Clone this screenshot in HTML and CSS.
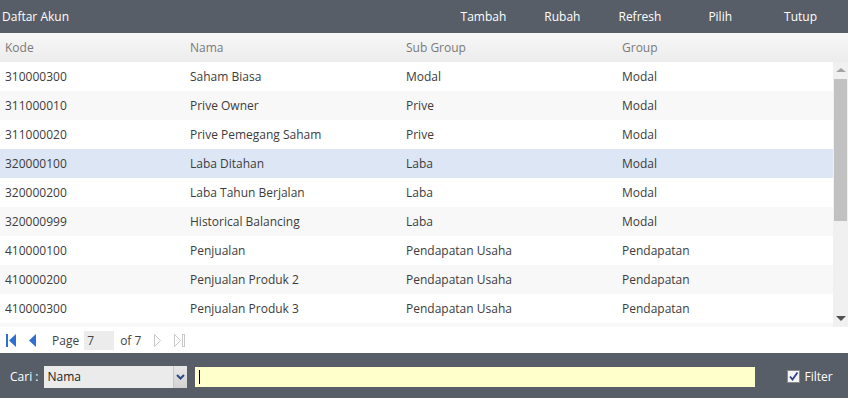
FILE: index.html
```html
<!DOCTYPE html>
<html lang="en">
<head>
    <meta charset="UTF-8">
    <title>Daftar Akun</title>
    <link rel="stylesheet" href="styles.css">
</head>
<body>
    <div class="toolbar">
        <span class="title">Daftar Akun</span>
        <div class="actions">
            <a class="btn btn-tambah">Tambah</a>
            <a class="btn btn-rubah">Rubah</a>
            <a class="btn btn-refresh">Refresh</a>
            <a class="btn btn-pilih">Pilih</a>
            <a class="btn btn-tutup">Tutup</a>
        </div>
    </div>

    <div class="grid-head">
        <div class="col col-kode">Kode</div>
        <div class="col col-nama">Nama</div>
        <div class="col col-sub">Sub Group</div>
        <div class="col col-group">Group</div>
    </div>

    <div class="grid-body">
        <div class="rows">
            <div class="row"><div class="col col-kode">310000300</div><div class="col col-nama">Saham Biasa</div><div class="col col-sub">Modal</div><div class="col col-group">Modal</div></div>
            <div class="row alt"><div class="col col-kode">311000010</div><div class="col col-nama">Prive Owner</div><div class="col col-sub">Prive</div><div class="col col-group">Modal</div></div>
            <div class="row"><div class="col col-kode">311000020</div><div class="col col-nama">Prive Pemegang Saham</div><div class="col col-sub">Prive</div><div class="col col-group">Modal</div></div>
            <div class="row selected"><div class="col col-kode">320000100</div><div class="col col-nama">Laba Ditahan</div><div class="col col-sub">Laba</div><div class="col col-group">Modal</div></div>
            <div class="row"><div class="col col-kode">320000200</div><div class="col col-nama">Laba Tahun Berjalan</div><div class="col col-sub">Laba</div><div class="col col-group">Modal</div></div>
            <div class="row alt"><div class="col col-kode">320000999</div><div class="col col-nama">Historical Balancing</div><div class="col col-sub">Laba</div><div class="col col-group">Modal</div></div>
            <div class="row"><div class="col col-kode">410000100</div><div class="col col-nama">Penjualan</div><div class="col col-sub">Pendapatan Usaha</div><div class="col col-group">Pendapatan</div></div>
            <div class="row alt"><div class="col col-kode">410000200</div><div class="col col-nama">Penjualan Produk 2</div><div class="col col-sub">Pendapatan Usaha</div><div class="col col-group">Pendapatan</div></div>
            <div class="row"><div class="col col-kode">410000300</div><div class="col col-nama">Penjualan Produk 3</div><div class="col col-sub">Pendapatan Usaha</div><div class="col col-group">Pendapatan</div></div>
            <div class="row alt"></div>
        </div>
        <div class="scrollbar">
            <div class="arrow arrow-up"></div>
            <div class="thumb-track"><div class="thumb"></div></div>
            <div class="arrow arrow-down"></div>
        </div>
    </div>

    <div class="pager">
        <svg class="pg-icon" width="11" height="13" viewBox="0 0 11 13"><rect x="0" y="0" width="2" height="13" fill="#2f6fd0"/><polygon points="10,0 10,13 3,6.5" fill="#2f6fd0"/></svg>
        <svg class="pg-icon pg-prev" width="7" height="13" viewBox="0 0 7 13"><polygon points="7,0 7,13 0,6.5" fill="#2f6fd0"/></svg>
        <span class="pg-label pg-page">Page</span>
        <span class="pg-input">7</span>
        <span class="pg-label">of 7</span>
        <svg class="pg-icon pg-next" width="7" height="13" viewBox="0 0 7 13"><polygon points="0.5,0.5 0.5,12.5 6.5,6.5" fill="#fff" stroke="#c8c8c8"/></svg>
        <svg class="pg-icon pg-last" width="11" height="13" viewBox="0 0 11 13"><polygon points="0.5,0.5 0.5,12.5 6.5,6.5" fill="#fff" stroke="#c8c8c8"/><rect x="8.5" y="0.5" width="2" height="12" fill="#fff" stroke="#c8c8c8"/></svg>
    </div>

    <div class="footer">
        <span class="cari">Cari :</span>
        <div class="select">
            <span class="select-text">Nama</span>
            <span class="select-btn">
                <svg width="9" height="6" viewBox="0 0 9 6"><polyline points="1,1 4.5,4.5 8,1" fill="none" stroke="#2c4a86" stroke-width="2"/></svg>
            </span>
        </div>
        <div class="search"><span class="caret"></span></div>
        <label class="filter">
            <span class="check">
                <svg width="11" height="11" viewBox="0 0 11 11"><polyline points="2,5.5 4.5,8.5 9.5,1.5" fill="none" stroke="#2c3f8c" stroke-width="1.8"/></svg>
            </span>
            Filter
        </label>
    </div>
</body>
</html>
```

FILE: styles.css
```css
body {
    margin: 0;
    font-family: 'Open Sans', 'Noto Sans', sans-serif;
    font-size: 12px;
    color: #333;
    background-color: #fff;
    width: 848px;
    height: 398px;
    overflow: hidden;
}

.toolbar {
    height: 33px;
    background-color: #575e67;
    color: #fff;
    display: flex;
    align-items: center;
    justify-content: space-between;
}

.title {
    padding-left: 2px;
    font-size: 12px;
}

.actions {
    display: flex;
    align-items: center;
}

.btn {
    font-size: 12px;
    color: #fff;
}

.btn-tambah { margin-right: 38px; }
.btn-rubah { margin-right: 38px; }
.btn-refresh { margin-right: 47px; }
.btn-pilih { margin-right: 52px; }
.btn-tutup { margin-right: 31px; }

.grid-head {
    height: 29px;
    display: flex;
    align-items: center;
    background: linear-gradient(#f7f7f7, #ececec);
    color: #7a7a7a;
}

.col {
    padding-left: 5px;
    white-space: nowrap;
    overflow: hidden;
}

.col-kode { width: 180px; }
.col-nama { width: 211px; }
.col-sub { width: 211px; }
.col-group { width: 200px; }

.grid-body {
    height: 265px;
    display: flex;
    overflow: hidden;
}

.rows {
    flex: 1;
    overflow: hidden;
}

.row {
    height: 29px;
    display: flex;
    align-items: center;
    background-color: #fff;
    color: #3c3c3c;
}

    .row.alt {
        background-color: #f8f8f8;
    }

    .row.selected {
        background-color: #dde6f4;
    }

.scrollbar {
    width: 15px;
    background-color: #f0f0f0;
    display: flex;
    flex-direction: column;
    align-items: center;
}

.arrow {
    width: 0;
    height: 0;
    border-left: 5px solid transparent;
    border-right: 5px solid transparent;
}

.arrow-up {
    margin-top: 6px;
    border-bottom: 4px solid #a3a3a3;
}

.arrow-down {
    margin-bottom: 6px;
    border-top: 5px solid #505050;
}

.thumb-track {
    flex: 1;
    width: 100%;
    padding-top: 7px;
}

.thumb {
    height: 142px;
    margin: 0 1px;
    background-color: #c1c1c1;
}

.pager {
    height: 26px;
    display: flex;
    align-items: center;
    padding-left: 6px;
    color: #444;
}

.pg-icon { margin-right: 12px; }
.pg-prev { margin-right: 16px; }
.pg-next { margin-left: 9px; margin-right: 13px; }

.pg-label { margin-right: 4px; }
.pg-page { margin-right: 5px; }

.pg-input {
    width: 27px;
    height: 19px;
    line-height: 19px;
    padding-left: 3px;
    margin-right: 6px;
    background-color: #ececec;
}

.footer {
    height: 45px;
    background-color: #575e67;
    display: flex;
    align-items: center;
    color: #fff;
    padding-top: 2px;
    box-sizing: border-box;
}

.cari {
    margin-left: 10px;
    margin-right: 6px;
}

.select {
    width: 143px;
    height: 22px;
    display: flex;
    background-color: #ebebeb;
    color: #222;
}

.select-text {
    flex: 1;
    line-height: 22px;
    padding-left: 3px;
}

.select-btn {
    width: 13px;
    display: flex;
    align-items: center;
    justify-content: center;
    background: linear-gradient(#e8e8e8, #d2d2d2);
    border-left: 1px solid #c8c8c8;
}

.search {
    width: 560px;
    height: 20px;
    margin-left: 8px;
    background-color: #ffffcc;
    display: flex;
    align-items: center;
}

.caret {
    width: 1px;
    height: 14px;
    margin-left: 4px;
    background-color: #000;
}

.filter {
    display: flex;
    align-items: center;
    margin-left: 32px;
    font-size: 12px;
}

.check {
    width: 11px;
    height: 11px;
    border: 1px solid #8a8a8a;
    background-color: #f4f4f4;
    margin-right: 4px;
    display: flex;
}
```
